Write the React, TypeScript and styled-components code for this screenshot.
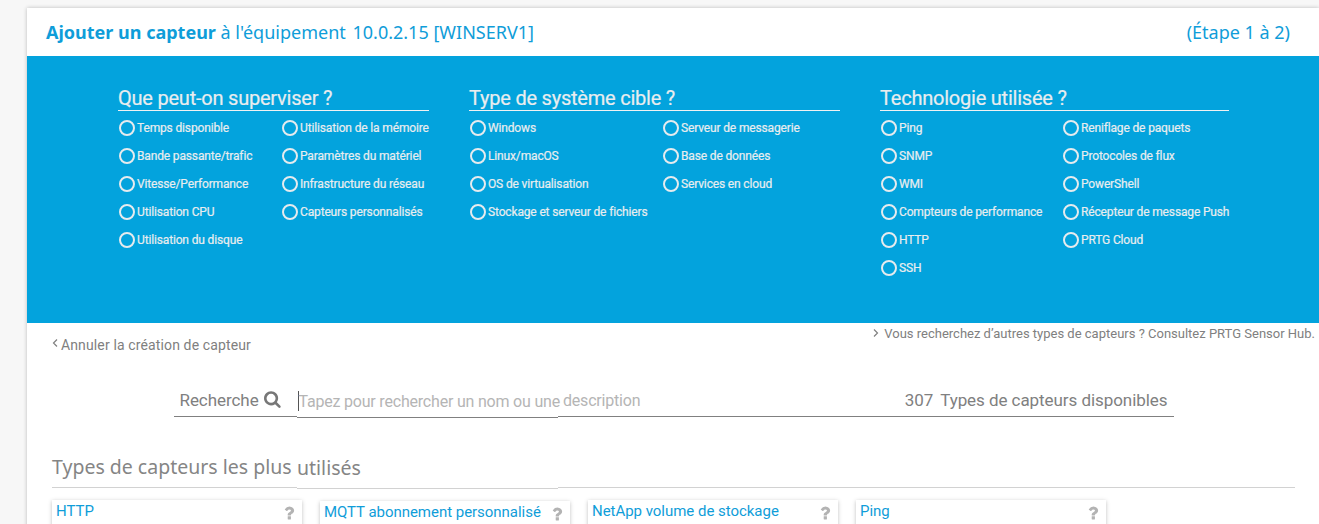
import React from "react";
import styled, { createGlobalStyle } from "styled-components";

const Global = createGlobalStyle`
  * { box-sizing: border-box; }
  html, body { margin: 0; background: #f7f7f7; overflow: hidden; }
  body { font-family: Roboto, "Liberation Sans", sans-serif; color: #808080; }
`;

const Page = styled.main`
  height: 524px;
  padding: 8px 0 0 27px;
  overflow: hidden;
`;
const Sheet = styled.div`
  height: 530px;
  background: #fff;
  box-shadow: 0 0 4px rgba(0, 0, 0, 0.24);
`;
const Header = styled.header`
  height: 48px;
  padding: 0 29px 0 19px;
  display: flex;
  align-items: center;
  justify-content: space-between;
  font: 18px/24px "Noto Sans", "Open Sans", sans-serif;
  color: #0f9dd9;
  white-space: pre;
`;
const Title = styled.h1`
  margin: 0;
  font: inherit;
`;
const Device = styled.span`
  margin-left: 2px;
`;
const Filters = styled.section`
  height: 267px;
  padding: 31px 0 0 91px;
  display: flex;
  background: #03a3dd;
  color: #e9edef;
`;
const Group = styled.div<{ $width: number; $gap: number }>`
  width: ${(p) => p.$width}px;
  margin-right: ${(p) => p.$gap}px;
`;
const GroupTitle = styled.h2`
  margin: 0 0 3px;
  height: 24px;
  border-bottom: 1px solid #f0f2f3;
  font-size: 20px;
  line-height: 23px;
  font-weight: 400;
  letter-spacing: -0.22px;
  -webkit-text-stroke: 0.2px #e9edef;
  white-space: nowrap;
`;
const Options = styled.div<{ $first: number }>`
  display: grid;
  grid-template-columns: ${(p) => p.$first}px 1fr;
`;
const Option = styled.label`
  height: 28px;
  padding: 0 0 1px 1px;
  display: flex;
  align-items: center;
  gap: 2px;
  font-size: 12px;
  line-height: 16px;
  letter-spacing: -0.15px;
  -webkit-text-stroke: 0.2px #e9edef;
  white-space: nowrap;
`;
const Radio = styled.span`
  width: 16px;
  height: 16px;
  margin-top: 1px;
  border: 2px solid #e6ebee;
  border-radius: 50%;
`;
const Links = styled.nav`
  height: 52px;
  padding: 0 4px 0 25px;
  display: flex;
  justify-content: space-between;
`;
const Link = styled.a<{ $top: number; $size: number; $gap: number; $tracking?: number }>`
  margin-top: ${(p) => p.$top}px;
  height: 18px;
  display: flex;
  gap: ${(p) => p.$gap}px;
  font-size: ${(p) => p.$size}px;
  line-height: 18px;
  letter-spacing: ${(p) => p.$tracking ?? 0}px;
  white-space: nowrap;
`;
const Chevron = styled.svg<{ $top: number }>`
  width: 6px;
  height: 10px;
  margin-top: ${(p) => p.$top}px;
  fill: none;
  stroke: #808080;
  stroke-width: 1.2;
`;
const Search = styled.div`
  width: 1000px;
  margin-left: 147px;
  display: flex;
  font-size: 17px;
  line-height: 24px;
  letter-spacing: -0.06px;
  white-space: nowrap;
`;
const Segment = styled.div<{ $width?: number; $drop?: boolean }>`
  ${(p) => (p.$width ? `width: ${p.$width}px;` : "flex: 1;")}
  height: ${(p) => (p.$drop ? 43 : 42)}px;
  padding-top: ${(p) => (p.$drop ? 14 : 13)}px;
  display: flex;
  border-bottom: 1px solid #808080;
`;
const SearchLabel = styled.span`
  margin: 0 5px 0 5.5px;
`;
const Icon = styled.svg<{ $color: string }>`
  width: 18px;
  height: 18px;
  flex: none;
  fill: ${(p) => p.$color};
`;
const SearchIcon = styled(Icon)`
  margin: 2px 0 0 0.5px;
`;
const Caret = styled.span`
  width: 1px;
  height: 20px;
  flex: none;
  margin: 2px -1px 0 1px;
  background: #555;
`;
const Placeholder = styled.span<{ $indent: number }>`
  margin-left: ${(p) => p.$indent}px;
  padding-top: 1px;
  font-size: 16px;
  letter-spacing: -0.2px;
  color: #b5b5b5;
`;
const Count = styled.span`
  margin: 0 6.5px 0 auto;
  display: flex;
  gap: 7px;
`;
const Popular = styled.section`
  padding: 35px 24px 0 25px;
`;
const Heading = styled.div`
  display: flex;
  font: 19.5px/27px "Noto Sans", "Open Sans", sans-serif;
  color: #858585;
  white-space: nowrap;
`;
const HeadingPart = styled.span<{ $width?: number; $drop?: boolean }>`
  ${(p) => (p.$width ? `width: ${p.$width}px;` : "flex: 1;")}
  height: ${(p) => (p.$drop ? 36 : 35)}px;
  padding-top: ${(p) => (p.$drop ? 1 : 0)}px;
  border-bottom: 1px solid #d2d2d2;
`;
const Cards = styled.div`
  margin-top: 11px;
  display: flex;
  align-items: flex-start;
  gap: 18px;
`;
const Card = styled.article<{ $drop?: boolean }>`
  width: 250px;
  height: 60px;
  margin-top: ${(p) => (p.$drop ? 1 : 0)}px;
  padding: 0 4.5px 0 4px;
  display: flex;
  justify-content: space-between;
  box-shadow: 0 1px 4px rgba(0, 0, 0, 0.25);
  font-size: 15px;
  line-height: 22px;
  letter-spacing: -0.03px;
  color: #0f9dd9;
  white-space: nowrap;
`;
const Help = styled.span`
  padding-top: 4px;
`;

const SEARCH =
  "M1152 832q0-185-131.5-316.5t-316.5-131.5-316.5 131.5-131.5 316.5 131.5 316.5 316.5 131.5 316.5-131.5 131.5-316.5zm512 832q0 52-38 90t-90 38q-54 0-90-38l-343-342q-179 124-399 124-143 0-273.5-55.5t-225-150-150-225-55.5-273.5 55.5-273.5 150-225 225-150 273.5-55.5 273.5 55.5 225 150 150 225 55.5 273.5q0 220-124 399l343 343q37 37 37 90z";
const QUESTION =
  "M1088 1256v240q0 16-12 28t-28 12h-240q-16 0-28-12t-12-28v-240q0-16 12-28t28-12h240q16 0 28 12t12 28zm316-600q0 54-15.5 101t-35 76.5-55 59.5-57.5 43.5-61 35.5q-41 23-68.5 65t-27.5 67q0 17-12 32.5t-28 15.5h-240q-15 0-25.5-18.5t-10.5-37.5v-45q0-83 65-156.5t143-108.5q59-27 84-56t25-76q0-42-46.5-74t-107.5-32q-65 0-108 29-35 25-107 115-13 16-31 16-12 0-25-8l-164-125q-13-10-15.5-25t5.5-28q160-266 464-266 80 0 161 31t146 83 106 127.5 41 158.5z";

const groups = [
  {
    title: "Que peut-on superviser ?", width: 311, gap: 40, first: 163,
    rows: [
      ["Temps disponible", "Utilisation de la mémoire"],
      ["Bande passante/trafic", "Paramètres du matériel"],
      ["Vitesse/Performance", "Infrastructure du réseau"],
      ["Utilisation CPU", "Capteurs personnalisés"],
      ["Utilisation du disque", ""],
    ],
  },
  {
    title: "Type de système cible ?", width: 371, gap: 40, first: 193,
    rows: [
      ["Windows", "Serveur de messagerie"],
      ["Linux/macOS", "Base de données"],
      ["OS de virtualisation", "Services en cloud"],
      ["Stockage et serveur de fichiers", ""],
    ],
  },
  {
    title: "Technologie utilisée ?", width: 349, gap: 0, first: 182,
    rows: [
      ["Ping", "Reniflage de paquets"],
      ["SNMP", "Protocoles de flux"],
      ["WMI", "PowerShell"],
      ["Compteurs de performance", "Récepteur de message Push"],
      ["HTTP", "PRTG Cloud"],
      ["SSH", ""],
    ],
  },
];

const cards = [
  { name: "HTTP" },
  { name: "MQTT abonnement personnalisé", drop: true },
  { name: "NetApp volume de stockage" },
  { name: "Ping" },
];

export default function App() {
  return (
    <Page>
      <Global />
      <Sheet>
        <Header>
          <Title>
            <b>Ajouter un capteur</b> à l'équipement <Device>10.0.2.15 [WINSERV1]</Device>
          </Title>
          <span>(Étape 1 à 2)</span>
        </Header>
        <Filters>
          {groups.map((g) => (
            <Group key={g.title} $width={g.width} $gap={g.gap}>
              <GroupTitle>{g.title}</GroupTitle>
              <Options $first={g.first}>
                {g.rows.flat().map((name, i) =>
                  name ? (
                    <Option key={i}>
                      <Radio />
                      {name}
                    </Option>
                  ) : (
                    <span key={i} />
                  )
                )}
              </Options>
            </Group>
          ))}
        </Filters>
        <Links>
          <Link $top={13} $size={14} $gap={3} $tracking={0.13}>
            <Chevron $top={2} viewBox="0 0 6 10"><path d="M5 1.5 1.5 5 5 8.5" /></Chevron>
            Annuler la création de capteur
          </Link>
          <Link $top={2} $size={13} $gap={5}>
            <Chevron $top={3} viewBox="0 0 6 10"><path d="M1 1.5 4.5 5 1 8.5" /></Chevron>
            Vous recherchez d’autres types de capteurs ? Consultez PRTG Sensor Hub.
          </Link>
        </Links>
        <Search>
          <Segment $width={123}>
            <SearchLabel>Recherche</SearchLabel>
            <SearchIcon $color="#777" viewBox="0 0 1792 1792"><path d={SEARCH} /></SearchIcon>
          </Segment>
          <Segment $width={261} $drop>
            <Caret />
            <Placeholder $indent={0.5}>Tapez pour rechercher un nom ou une</Placeholder>
          </Segment>
          <Segment>
            <Placeholder $indent={5}>description</Placeholder>
            <Count>
              <span>307</span>
              <span>Types de capteurs disponibles</span>
            </Count>
          </Segment>
        </Search>
        <Popular>
          <Heading>
            <HeadingPart $width={245}>Types de capteurs les plus</HeadingPart>
            <HeadingPart $width={261} $drop>utilisés</HeadingPart>
            <HeadingPart />
          </Heading>
          <Cards>
            {cards.map((c) => (
              <Card key={c.name} $drop={c.drop}>
                {c.name}
                <Help>
                  <Icon $color="#b3b3b3" viewBox="0 0 1792 1792"><path d={QUESTION} /></Icon>
                </Help>
              </Card>
            ))}
          </Cards>
        </Popular>
      </Sheet>
    </Page>
  );
}
